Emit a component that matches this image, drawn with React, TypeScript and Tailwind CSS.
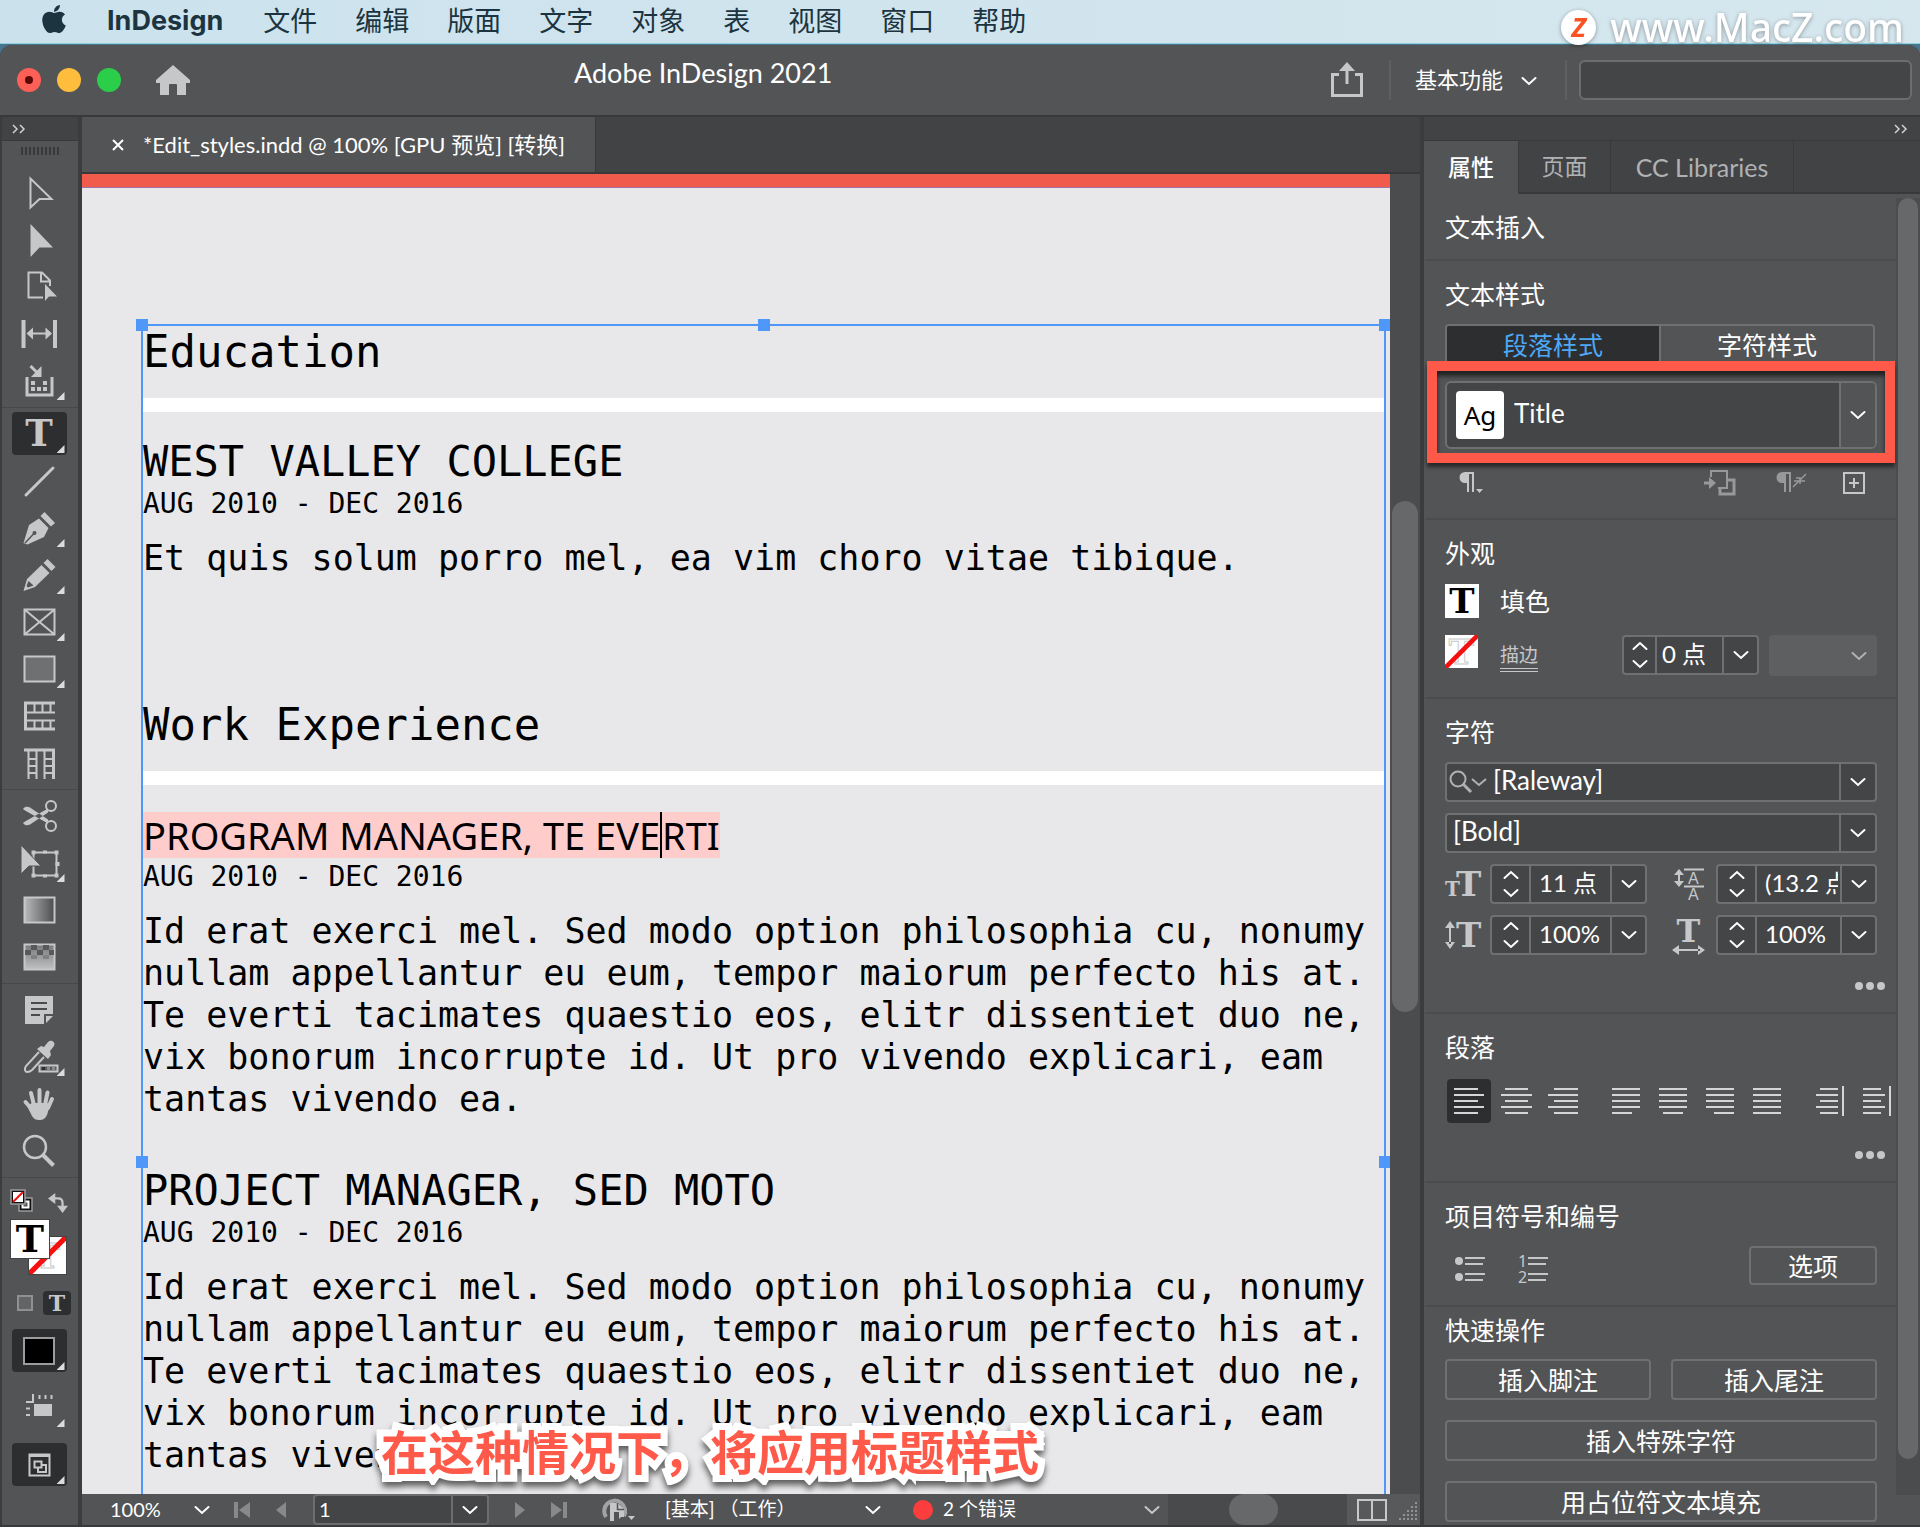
import React, { useState } from 'react';
import { FaApple } from 'react-icons/fa';

const ICON = '#c6c7c9';

const menuItems = ['文件', '编辑', '版面', '文字', '对象', '表', '视图', '窗口', '帮助'];

const bodyLines = [
  'Id erat exerci mel. Sed modo option philosophia cu, nonumy',
  'nullam appellantur eu eum, tempor maiorum perfecto his at.',
  'Te everti tacimates quaestio eos, elitr dissentiet duo ne,',
  'vix bonorum incorrupte id. Ut pro vivendo explicari, eam',
  'tantas vivendo ea.',
];

function Chevron({ up = false, className = '' }: { up?: boolean; className?: string }) {
  return (
    <svg width="16" height="10" viewBox="0 0 16 10" fill="none" className={className}>
      <path
        d={up ? 'M1.500 8 8 2l6.500 6' : 'M1.500 2 8 8l6.500-6'}
        stroke="currentColor"
        strokeWidth="2"
        strokeLinecap="round"
      />
    </svg>
  );
}

function DoubleChevron() {
  return (
    <svg width="14" height="10" viewBox="0 0 14 10" fill="none" stroke="#d0d1d3" strokeWidth="1.500">
      <path d="M1 1l4 4-4 4M8 1l4 4-4 4" />
    </svg>
  );
}

function Glyph({ children }: { children: React.ReactNode }) {
  return (
    <svg width="36" height="36" viewBox="0 0 36 36" fill="none" stroke={ICON} strokeWidth="2" className="overflow-visible">
      {children}
    </svg>
  );
}

function SlabT({ className }: { className: string }) {
  return <span className={`font-['DejaVu_Serif',serif] leading-none font-bold ${className}`}>T</span>;
}

interface Tool {
  name: string;
  icon: React.ReactNode;
  flyout?: boolean;
}

const toolGroups: Tool[][] = [
  [
    { name: '选择', icon: <Glyph><path d="M9.500 3.500v29l9-8.500h12z" /></Glyph> },
    { name: '直接选择', icon: <Glyph><path d="M9.500 2v33l9-9.500H32z" fill={ICON} stroke="none" /></Glyph> },
    {
      name: '页面',
      icon: (
        <Glyph>
          <path d="M22 28.500H7.500v-25H21l8 8V17M20 3.500v9h9" />
          <path d="M24 15v17l4-4.500h8z" fill={ICON} stroke="none" />
        </Glyph>
      ),
    },
    {
      name: '间隙',
      icon: (
        <Glyph>
          <path d="M2.500 4v28M34 4v28" strokeWidth="4" />
          <path d="M10 17.500h16" />
          <path d="M5.500 17.500l6.500-6v12zM31 17.500l-6.500-6v12z" fill={ICON} stroke="none" />
        </Glyph>
      ),
    },
    {
      name: '内容收集器',
      flyout: true,
      icon: (
        <Glyph>
          <path d="M6 14v18h25V14" strokeWidth="3" />
          <path d="M9.500 3l7 7" strokeWidth="3" />
          <path d="M20.500 3v11H10z" fill={ICON} stroke="none" />
          <path d="M10 20h4M22 20h4M10 26h4M16 26h4M22 26h4" strokeWidth="4" />
        </Glyph>
      ),
    },
  ],
  [
    { name: '文字', flyout: true, icon: <SlabT className="text-[37px] text-[#c6c7c9]" /> },
    { name: '直线', icon: <Glyph><path d="M5 32L32 5" strokeWidth="3" strokeLinecap="round" /></Glyph> },
    {
      name: '钢笔',
      flyout: true,
      icon: (
        <Glyph>
          <path d="M19.500 6l4-4 10.500 11-4 3.500zM18 8.500l9.500 9.500-4.500 9-16.500 7.500-4-1.500L8 15z" fill={ICON} stroke="none" />
          <path d="M4 33l9-9.500" stroke="#535456" strokeWidth="1.500" />
          <circle cx="13.500" cy="23" r="2" fill="#535456" stroke="none" />
        </Glyph>
      ),
    },
    {
      name: '铅笔',
      flyout: true,
      icon: (
        <Glyph>
          <path d="M22.500 6l4-4 8 8-4 4zM20.500 8l8 8L14 30 2.500 34 6 22z" fill={ICON} stroke="none" />
          <path d="M7.500 24l5 4.500-5.500 2-1.500-1.500z" fill="#535456" stroke="none" />
        </Glyph>
      ),
    },
    {
      name: '矩形框架',
      flyout: true,
      icon: <Glyph><path d="M3.500 5.500h30v25h-30zM3.500 5.500l30 25M33.500 5.500l-30 25" /></Glyph>,
    },
    {
      name: '矩形',
      flyout: true,
      icon: <Glyph><path d="M3.500 5.500h30v25h-30z" fill="#6f7072" /></Glyph>,
    },
    {
      name: '水平网格',
      icon: (
        <Glyph>
          <path d="M34 5H4.500v26H34" strokeWidth="3" />
          <path d="M4 14.500h30M4 22.500h30M13.500 5v9M21.500 5v9M29.500 5v9M13.500 23v8M21.500 23v8M29.500 23v8" />
        </Glyph>
      ),
    },
    {
      name: '垂直网格',
      icon: (
        <Glyph>
          <path d="M3 5h29.500v29" strokeWidth="3" />
          <path d="M7.500 5v29M15.500 5v29M23.500 5v29M7 14h8M7 21h8M7 28h8M23 14h8M23 21h8M23 28h8" />
        </Glyph>
      ),
    },
  ],
  [
    {
      name: '剪刀',
      icon: (
        <Glyph>
          <circle cx="30" cy="8" r="5" />
          <circle cx="30" cy="28" r="5" />
          <path d="M2 11c2-3 5-2.500 7-1.500l18 12v4L4 12.500zM2 25c2 3 5 2.500 7 1.500l18-12v-4L4 23.500z" fill={ICON} stroke="none" />
        </Glyph>
      ),
    },
    {
      name: '自由变换',
      flyout: true,
      icon: (
        <Glyph>
          <path d="M12.500 7.500h23v23h-23z" />
          <path
            d="M10.500 5.500h4v4h-4zM22 5.500h4v3h-4zM33.500 5.500h4v4h-4zM34.500 17h4v4h-4zM33.500 28.500h4v4h-4zM22 29.500h4v3h-4zM10.500 28.500h4v4h-4z"
            fill={ICON}
            stroke="none"
          />
          <path d="M0 0v29l8-8h12z" fill={ICON} stroke="#535456" strokeWidth="1" />
        </Glyph>
      ),
    },
    {
      name: '渐变色板',
      icon: (
        <Glyph>
          <linearGradient id="gradH">
            <stop offset="0" stopColor="#b9babc" />
            <stop offset="1" stopColor="#4b4c4e" />
          </linearGradient>
          <path d="M3.500 5.500h30v25h-30z" fill="url(#gradH)" />
        </Glyph>
      ),
    },
    {
      name: '渐变羽化',
      icon: (
        <Glyph>
          <linearGradient id="gradV" x2="0" y2="1">
            <stop offset="0" stopColor="#77787a" />
            <stop offset="1" stopColor="#c0c1c3" />
          </linearGradient>
          <path d="M3.500 5.500h30v25h-30z" fill="url(#gradV)" />
          <path d="M10 6h6v5h-6zM22 6h6v5h-6zM4 11h6v5H4zM16 11h6v5h-6zM28 11h5v5h-5z" fill="#58595b" stroke="none" />
          <path d="M10 16h6v4h-6zM22 16h6v4h-6z" fill="#808183" stroke="none" />
        </Glyph>
      ),
    },
  ],
  [
    {
      name: '附注',
      icon: (
        <Glyph>
          <path d="M4 4h28v18h-9v10H4zM25 24h7l-7 7z" fill={ICON} stroke="none" />
          <path d="M10 11h16M10 17h16M10 23h9" stroke="#4a4b4d" />
        </Glyph>
      ),
    },
    {
      name: '颜色主题',
      flyout: true,
      icon: (
        <Glyph>
          <path d="M18 13L5 27c-2 3-1 6 1 6s4-1 5-2l12-13" />
          <path d="M16 10l4-3 3 1 4-5c3-3 8 0 6 4l-4 5 1 4-3 4z" fill={ICON} stroke="none" />
          <path d="M18.500 26.500h18v6h-18z" fill="#58595b" />
          <path d="M21 29.500h3" strokeWidth="3" stroke="#2f3032" />
          <path d="M26 29.500h3M31 29.500h3" strokeWidth="3" stroke="#8a8b8d" />
        </Glyph>
      ),
    },
    {
      name: '抓手',
      icon: (
        <Glyph>
          <path d="M10 7l3 12M18.500 4v14M26.500 6.500L24 19M31 13l-4 9M4.500 16l8 9" strokeWidth="4" strokeLinecap="round" />
          <path d="M11 17h15l3 2-3 10c-2 4-4 5-8 5-3 0-5-1-7-4L6 20z" fill={ICON} stroke="none" />
        </Glyph>
      ),
    },
    {
      name: '缩放显示',
      icon: (
        <Glyph>
          <circle cx="14" cy="14" r="11" strokeWidth="2.500" />
          <path d="M22 22l10.500 10.500" strokeWidth="4" />
        </Glyph>
      ),
    },
  ],
];

function FlyoutMark() {
  return <span className="absolute right-0.5 bottom-0.5 h-2 w-2 bg-[#dcdcde] [clip-path:polygon(100%_0,100%_100%,0_100%)]" />;
}

function ToolButton({ tool, active }: { tool: Tool; active: boolean }) {
  return (
    <button
      aria-label={tool.name}
      className={`relative flex h-[43px] w-[55px] items-center justify-center rounded ${active ? 'bg-[#2d2e30]' : ''}`}
    >
      {tool.icon}
      {tool.flyout && <FlyoutMark />}
    </button>
  );
}

function StrokeNone({ className }: { className: string }) {
  return (
    <span className={`relative flex items-center justify-center overflow-hidden bg-white ${className}`}>
      <SlabT className="text-[34px] text-white [-webkit-text-stroke:1px_#c9c9c9]" />
      <svg viewBox="0 0 36 36" className="absolute inset-0 h-full w-full">
        <path d="M0 36L36 0" stroke="#f50f0f" strokeWidth="5" />
      </svg>
    </span>
  );
}

function Toolbar() {
  return (
    <aside className="flex w-[82px] shrink-0 flex-col border-r-4 border-l-2 border-[#3b3c3e] bg-[#535456]">
      <div className="flex h-6 items-center border-b border-[#38393b] bg-[#424345] px-2.5">
        <DoubleChevron />
      </div>
      <div className="mx-auto mt-1.5 mb-4 h-2 w-[38px] bg-[repeating-linear-gradient(90deg,#38393b_0_2px,transparent_2px_4px)]" />
      {toolGroups.map((group, i) => (
        <div key={i} className={`flex flex-col items-center gap-1 border-b border-[#47484a] pr-0.5 pb-[5px] ${i === 0 ? '' : 'pt-1'}`}>
          {group.map((tool) => (
            <ToolButton key={tool.name} tool={tool} active={tool.name === '文字'} />
          ))}
        </div>
      ))}
      <div className="flex justify-between pt-[11px] pr-2.5 pl-2">
        <button aria-label="默认填色和描边">
          <svg width="24" height="24" viewBox="0 0 24 24">
            <path d="M9 9h13v13H9z" fill="#111" stroke="#9b9c9e" strokeWidth="1.500" />
            <path d="M12.500 12.500h6v6h-6z" fill="#555" stroke="#fff" strokeWidth="2" />
            <path d="M1 1h14v14H1z" fill="#111" stroke="#9b9c9e" strokeWidth="1.500" />
            <path d="M3 3h10v10H3z" fill="#fff" />
            <path d="M3 13L13 3" stroke="#f50f0f" strokeWidth="2" />
          </svg>
        </button>
        <button aria-label="互换填色和描边" className="mt-1">
          <svg width="20" height="20" viewBox="0 0 22 22">
            <path d="M6 6h5q5 0 5 5v4" fill="none" stroke={ICON} strokeWidth="2.500" />
            <path d="M0 6l8-6v12zM10 14h12l-6 8z" fill={ICON} />
          </svg>
        </button>
      </div>
      <div className="relative mx-2 mt-1.5 h-14">
        <StrokeNone className="absolute top-[17px] left-[18px] h-[39px] w-[39px] border border-[#444]" />
        <span className="absolute top-0 left-0 flex h-10 w-10 items-center justify-center border border-[#444] bg-white">
          <SlabT className="text-[38px] text-black" />
        </span>
      </div>
      <div className="mt-4 flex items-center justify-end gap-2.5 pr-[7px]">
        <button aria-label="格式针对容器" className="h-4 w-4 border-2 border-[#8f9092] bg-[#636466]" />
        <button aria-label="格式针对文本" className="flex h-6 w-7 items-center justify-center rounded bg-[#2d2e30]">
          <SlabT className="text-[22px] text-[#c6c7c9]" />
        </button>
      </div>
      <div className="mt-3.5 flex flex-col items-center gap-3.5 pr-0.5">
        <button aria-label="应用颜色" className="relative flex h-[43px] w-[55px] items-center justify-center rounded bg-[#2d2e30]">
          <span className="h-7 w-8 border-2 border-[#9b9c9e] bg-black" />
          <FlyoutMark />
        </button>
        <button aria-label="视图选项" className="relative flex h-[43px] w-[55px] items-center justify-center">
          <Glyph>
            <path d="M13 14h18v12H13z" fill={ICON} stroke="none" />
            <path d="M12 4v8H5M18.500 5v4M24.500 5v4M30.500 5v4M5 18.500h4M5 25h4" strokeWidth="2" />
          </Glyph>
          <FlyoutMark />
        </button>
        <button aria-label="屏幕模式" className="relative flex h-[43px] w-[55px] items-center justify-center rounded bg-[#2d2e30]">
          <Glyph>
            <path d="M8.500 7.500h20v21h-20zM8 9h21" />
            <path d="M13.500 14.500h7v6h-7zM17 21v4h8v-7h-4" />
          </Glyph>
          <FlyoutMark />
        </button>
      </div>
    </aside>
  );
}

function Handle({ className }: { className: string }) {
  return <span className={`absolute h-3 w-3 bg-[#4f98fa] ${className}`} />;
}

function SectionTitle({ children, className = '' }: { children: React.ReactNode; className?: string }) {
  return (
    <div className={className}>
      <h2 className="pb-5 text-[44px] leading-[52px]">{children}</h2>
      <div className="h-3.5 bg-white" />
    </div>
  );
}

function Dates() {
  return <p className="text-[28px] leading-[38px]">AUG 2010 - DEC 2016</p>;
}

function Body({ lines }: { lines: string[] }) {
  return (
    <div className="mt-3.5 text-[35px] leading-[42px]">
      {lines.map((line) => (
        <p key={line}>{line}</p>
      ))}
    </div>
  );
}

function Document() {
  return (
    <div className="relative flex min-w-0 flex-1 flex-col overflow-hidden border-t-[13px] border-[#f05b4c] bg-[#e8e8ea]">
      <div className="h-px bg-[#a374ac]" />
      <div className="relative mt-[136px] mr-1 ml-[59px] flex-1 border-x-2 border-t-2 border-[#4f98fa] font-['DejaVu_Sans_Mono',monospace] whitespace-nowrap text-black">
        <SectionTitle>Education</SectionTitle>
        <h3 className="mt-[27px] text-[42px] leading-[46px]">WEST VALLEY COLLEGE</h3>
        <Dates />
        <Body lines={['Et quis solum porro mel, ea vim choro vitae tibique.']} />
        <SectionTitle className="mt-[120px]">Work Experience</SectionTitle>
        <h3 className="mt-[27px] flex font-['Noto_Sans',sans-serif] text-[38px] leading-[46px]">
          <span className="bg-[#ffcccc]">PROGRAM MANAGER, TE EVE</span>
          <span className="w-0.5 bg-black" />
          <span className="bg-[#ffcccc]">RTI</span>
        </h3>
        <Dates />
        <Body lines={bodyLines} />
        <h3 className="mt-12 text-[42px] leading-[46px]">PROJECT MANAGER, SED MOTO</h3>
        <Dates />
        <Body lines={bodyLines} />
        <Handle className="-top-[7px] -left-[7px]" />
        <Handle className="-top-[7px] left-1/2 -ml-1.5" />
        <Handle className="-top-[7px] -right-[7px]" />
        <Handle className="top-[830px] -left-[7px]" />
        <Handle className="top-[830px] -right-[7px]" />
      </div>
      <p className="absolute bottom-2.5 left-[299px] font-['Noto_Sans_CJK_SC',sans-serif] text-[47px] leading-[68px] font-bold whitespace-nowrap text-[#ff594a] drop-shadow-[0_5px_3px_rgba(0,0,0,0.6)] [-webkit-text-stroke:14px_white] [paint-order:stroke_fill] [stroke-linejoin:round]">
        在这种情况下，将应用标题样式
      </p>
    </div>
  );
}

function StatusBar() {
  return (
    <footer className="flex h-[31px] items-stretch bg-[#535456] text-xl text-white">
      <label className="flex w-[128px] items-center justify-between pl-7">
        <select aria-label="缩放级别" className="w-16 appearance-none bg-transparent pb-0.5">
          <option>100%</option>
        </select>
        <Chevron />
      </label>
      <div className="ml-6 flex w-[52px] items-center justify-between">
        <button aria-label="首页">
          <svg width="16" height="16" viewBox="0 0 16 16" fill="#88898b"><path d="M0 0h4v16H0zM16 0v16L5 8z" /></svg>
        </button>
        <button aria-label="上一页">
          <svg width="10" height="16" viewBox="0 0 10 16" fill="#88898b"><path d="M10 0v16L0 8z" /></svg>
        </button>
      </div>
      <div className="ml-[27px] flex w-[176px] overflow-hidden rounded border-2 border-[#6c6d6f] bg-[#444547]">
        <input aria-label="页码" defaultValue="1" className="w-full min-w-0 bg-transparent px-1 pb-0.5 outline-none" />
        <button aria-label="选择页面" className="flex w-9 shrink-0 items-center justify-center border-l-2 border-[#6c6d6f]">
          <Chevron />
        </button>
      </div>
      <div className="ml-[26px] flex w-[52px] items-center justify-between">
        <button aria-label="下一页">
          <svg width="10" height="16" viewBox="0 0 10 16" fill="#88898b"><path d="M0 0v16l10-8z" /></svg>
        </button>
        <button aria-label="末页">
          <svg width="16" height="16" viewBox="0 0 16 16" fill="#88898b"><path d="M12 0h4v16h-4zM0 0v16l11-8z" /></svg>
        </button>
      </div>
      <button aria-label="打开文档" className="ml-[34px]">
        <svg width="34" height="26" viewBox="0 0 34 26" fill="none">
          <path d="M5 20A10.500 10.500 0 1 1 23 19" stroke="#a2a3a5" strokeWidth="4" />
          <path d="M9 6h8l6 6v8h-3l-2 2v-7h-5v9H9z" fill={ICON} />
          <path d="M16.500 6v6.500H23" stroke="#535456" strokeWidth="1.500" />
          <path d="M27 19h7l-3.500 4z" fill={ICON} />
        </svg>
      </button>
      <label className="ml-[30px] flex w-[216px] items-center justify-between">
        <select aria-label="印前检查配置文件" className="w-44 appearance-none bg-transparent text-[19px]">
          <option>[基本] （工作）</option>
        </select>
        <Chevron />
      </label>
      <label className="ml-8 flex w-[247px] items-center">
        <span className="h-5 w-5 shrink-0 rounded-full bg-[#fb3d3d]" />
        <select aria-label="印前检查错误" className="ml-2.5 flex-1 appearance-none bg-transparent text-[19px]">
          <option>2 个错误</option>
        </select>
        <Chevron className="text-[#c6c7c9]" />
      </label>
      <div className="ml-2 flex flex-1 bg-[#494a4c] pl-[61px]">
        <div className="w-[49px] rounded-full bg-[#67686a]" />
      </div>
      <div className="flex w-[73px] items-center gap-3 bg-[#58595b] pl-2.5">
        <button aria-label="拆分版面视图">
          <svg width="30" height="22" viewBox="0 0 30 22" fill="none" stroke={ICON} strokeWidth="2"><path d="M1 1h28v20H1zM15 1v20" /></svg>
        </button>
        <svg width="18" height="20" viewBox="0 0 18 20" stroke="#929395" strokeWidth="2" strokeDasharray="2 2">
          <path d="M0 19h18M4 15h14M8 11h10M12 7h6M16 3h2" />
        </svg>
      </div>
    </footer>
  );
}

function Section({ title, last = false, children }: { title: string; last?: boolean; children?: React.ReactNode }) {
  return (
    <section className={`pr-[19px] pl-5 ${last ? 'pt-[5px]' : 'border-b-2 border-[#4b4c4e] pt-[15px]'}`}>
      <h4 className="text-[25px] leading-9 text-white">{title}</h4>
      {children}
    </section>
  );
}

function Stepper({ label, value, className, compact = false }: { label: string; value: string; className: string; compact?: boolean }) {
  return (
    <div className={`flex h-10 overflow-hidden rounded border-2 border-[#6f7072] bg-[#444547] ${className}`}>
      <div className={`flex shrink-0 flex-col items-center justify-between border-r-2 border-[#6f7072] py-1 ${compact ? 'w-[33px]' : 'w-[39px]'}`}>
        <button aria-label={`${label} +`}><Chevron up /></button>
        <button aria-label={`${label} -`}><Chevron /></button>
      </div>
      <input
        aria-label={label}
        defaultValue={value}
        className={`mr-0.5 w-full min-w-0 bg-transparent pb-0.5 text-2xl outline-none ${compact ? 'pl-[5px]' : 'pl-2'}`}
      />
      <button aria-label={`${label} 预设`} className="flex w-[35px] shrink-0 items-center justify-center border-l-2 border-[#6f7072]">
        <Chevron />
      </button>
    </div>
  );
}

function Combo({ label, value, children }: { label: string; value: string; children?: React.ReactNode }) {
  return (
    <label className="flex h-10 items-center rounded border-2 border-[#6f7072] bg-[#444547]">
      {children}
      <select aria-label={label} className="h-full min-w-0 flex-1 appearance-none bg-transparent pb-1 pl-1.5 text-[26px] leading-8">
        <option>{value}</option>
      </select>
      <span className="flex h-full w-9 items-center justify-center border-l-2 border-[#6f7072]">
        <Chevron />
      </span>
    </label>
  );
}

function Dots() {
  return (
    <div className="flex justify-end">
      <button aria-label="更多选项" className="-mr-2 flex h-[22px] items-center gap-[3px]">
        <span className="h-2 w-2 rounded-full bg-[#c6c7c9]" />
        <span className="h-2 w-2 rounded-full bg-[#c6c7c9]" />
        <span className="h-2 w-2 rounded-full bg-[#c6c7c9]" />
      </button>
    </div>
  );
}

// each row is [start, end] of one line, top to bottom
const alignments: { name: string; rows: number[][]; bar?: boolean; gap?: boolean }[] = [
  { name: '左对齐', rows: [[0, 24], [0, 30], [0, 24], [0, 30], [0, 24]] },
  { name: '居中对齐', rows: [[4, 27], [0, 31], [4, 27], [0, 31], [4, 27]] },
  { name: '右对齐', rows: [[6, 30], [0, 30], [6, 30], [0, 30], [6, 30]] },
  { name: '双齐末行齐左', gap: true, rows: [[1, 29], [1, 29], [1, 29], [1, 29], [1, 21]] },
  { name: '双齐末行居中', rows: [[1, 29], [1, 29], [1, 29], [1, 29], [5, 25]] },
  { name: '双齐末行齐右', rows: [[1, 29], [1, 29], [1, 29], [1, 29], [9, 29]] },
  { name: '全部强制双齐', rows: [[1, 29], [1, 29], [1, 29], [1, 29], [1, 29]] },
  { name: '朝向书脊对齐', bar: true, gap: true, rows: [[5, 23], [1, 23], [5, 23], [1, 23], [5, 23]] },
  { name: '背向书脊对齐', bar: true, rows: [[1, 19], [1, 23], [1, 19], [1, 23], [1, 19]] },
];

function ActionButton({ children, className = 'h-[41px]' }: { children: string; className?: string }) {
  return (
    <button className={`rounded border-2 border-[#6f7072] text-[25px] leading-8 text-white ${className}`}>
      {children}
    </button>
  );
}

function PropertiesPanel() {
  const [align, setAlign] = useState('左对齐');

  return (
    <aside className="flex w-[496px] shrink-0 flex-col bg-[#535456] text-white">
      <div className="flex h-6 items-center justify-end border-b border-[#38393b] bg-[#424345] pr-3">
        <DoubleChevron />
      </div>
      <div className="flex h-[53px] bg-[#424345] text-[23px] text-[#b0b1b3]">
        <button className="w-[94px] bg-[#535456] font-medium text-white">属性</button>
        <button className="w-[93px] border-x border-b-2 border-[#38393b]">页面</button>
        <button className="w-[183px] border-r border-b-2 border-[#38393b] text-[25px] leading-8">CC Libraries</button>
        <div className="flex-1 border-b-2 border-[#38393b]" />
      </div>
      <div className="flex flex-1">
        <div className="min-w-0 flex-1 pl-px">
          <Section title="文本插入">
            <div className="h-3.5" />
          </Section>

          <Section title="文本样式">
            <div className="mt-3 mr-0.5 flex h-[42px] overflow-hidden rounded border-2 border-[#6f7072] text-[25px] leading-9">
              <button className="flex-1 border-r-2 border-[#6f7072] bg-[#2d2e30] text-[#4ea8f5]">段落样式</button>
              <button className="flex-1">字符样式</button>
            </div>
            <div className="relative mt-[15px]">
              <label className="flex h-[68px] items-center rounded-md border-2 border-[#6f7072] bg-[#444547]">
                <span className="ml-[9px] flex h-12 w-12 items-center justify-center rounded bg-white font-['Noto_Sans',sans-serif] text-[26px] text-black">
                  Ag
                </span>
                <select aria-label="段落样式" className="min-w-0 flex-1 appearance-none bg-transparent pb-1 pl-2.5 text-[26px]">
                  <option>Title</option>
                </select>
                <span className="flex h-full w-9 items-center justify-center rounded-r border-l-2 border-[#6f7072] bg-[#535456]">
                  <Chevron />
                </span>
              </label>
              <div className="pointer-events-none absolute -inset-x-[18px] -top-5 -bottom-3.5 border-10 border-[#ff594a] shadow-[0_4px_4px_rgba(0,0,0,0.55),inset_0_5px_4px_rgba(0,0,0,0.6)]" />
            </div>
            <div className="mt-[18px] mb-[19px] flex h-8 items-center pr-3 pl-3 text-[#c6c7c9]">
              <button aria-label="段落样式菜单">
                <svg width="28" height="26" viewBox="0 0 28 26" fill={ICON}>
                  <path d="M8 2h9v20h-2V4h-3v18h-2V13H8A5.500 5.500 0 0 1 8 2zM19 19h7l-3.500 4z" />
                </svg>
              </button>
              <button aria-label="重新定义样式" className="ml-auto opacity-60">
                <svg width="33" height="28" viewBox="0 0 33 28" fill="none" stroke={ICON} strokeWidth="2">
                  <path d="M7 8V2h16v17H14" />
                  <path d="M24 11h6v14H16v-6" strokeWidth="3" />
                  <path d="M0 14h7" strokeWidth="3" />
                  <path d="M5 8v12l7-6z" fill={ICON} stroke="none" />
                </svg>
              </button>
              <button aria-label="清除优先选项" className="ml-[38px] opacity-60">
                <svg width="32" height="26" viewBox="0 0 32 26" fill={ICON}>
                  <path d="M7 2h9v20h-2V4h-3v18H9V13H7A5.500 5.500 0 0 1 7 2z" />
                  <path d="M18 17L31 4M19 11h11M21 8h4v6" stroke={ICON} strokeWidth="1.500" fill="none" />
                </svg>
              </button>
              <button aria-label="创建新样式" className="ml-9">
                <svg width="22" height="22" viewBox="0 0 22 22" fill="none" stroke={ICON} strokeWidth="2">
                  <path d="M1 1h20v20H1zM11 6v10M6 11h10" />
                </svg>
              </button>
            </div>
          </Section>

          <Section title="外观">
            <div className="mt-3 flex h-9 items-center">
              <button aria-label="填色" className="flex h-[34px] w-[34px] items-center justify-center bg-white">
                <SlabT className="text-[34px] text-black" />
              </button>
              <span className="ml-[21px] text-[25px] leading-9">填色</span>
            </div>
            <div className="mt-4 mb-[21px] flex h-[41px]">
              <button aria-label="描边颜色" className="h-[33px] w-[34px]">
                <StrokeNone className="h-[33px] w-[33px]" />
              </button>
              <a href="#stroke" className="mt-1.5 ml-[21px] h-[31px] border-b-4 border-double border-[#c6c7c9] text-[19px] text-[#c6c7c9]">
                描边
              </a>
              <Stepper label="描边粗细" value="0 点" className="ml-auto w-[137px]" compact />
              <div className="ml-2.5 flex h-[41px] w-[108px] items-center justify-end rounded bg-[#5e5f61] pr-2.5 text-[#b0b1b3]">
                <Chevron />
              </div>
            </div>
          </Section>

          <Section title="字符">
            <div className="mt-3 flex flex-col gap-[11px]">
              <Combo label="字体" value="[Raleway]">
                <svg width="38" height="24" viewBox="0 0 38 24" fill="none" stroke="#b0b1b3" strokeWidth="2" className="ml-0.5">
                  <circle cx="9" cy="9" r="7.500" />
                  <path d="M14 14l8 8" strokeWidth="3" />
                  <path d="M23 9l7 6 7-6" />
                </svg>
              </Combo>
              <Combo label="字体样式" value="[Bold]" />
              <div className="flex items-center">
                <span className="flex w-[45px] items-baseline text-[#c6c7c9]">
                  <SlabT className="text-[20px]" />
                  <SlabT className="-ml-1 text-[34px]" />
                </span>
                <Stepper label="字体大小" value="11 点" className="w-[157px]" />
                <span className="ml-auto flex w-[42px] text-[#c6c7c9]">
                  <svg width="30" height="34" viewBox="0 0 30 34" fill="none" stroke={ICON} strokeWidth="2">
                    <path d="M5 5v12M10 2.500h20M10 19.500h20" />
                    <path d="M0 8l5-6 5 6zM0 14l5 6 5-6z" fill={ICON} stroke="none" />
                    <text x="14" y="17" fontSize="16" fontFamily="Liberation Sans" fill={ICON} stroke="none">A</text>
                    <text x="14" y="33" fontSize="16" fontFamily="Liberation Sans" fill={ICON} stroke="none">A</text>
                  </svg>
                </span>
                <Stepper label="行距" value="(13.2 点)" className="w-[161px]" />
              </div>
              <div className="flex items-center">
                <span className="flex w-[45px] items-center gap-px text-[#c6c7c9]">
                  <svg width="10" height="28" viewBox="0 0 10 28" fill={ICON}>
                    <path d="M4 5h2v18H4zM0 7l5-7 5 7zM0 21l5 7 5-7z" />
                  </svg>
                  <SlabT className="text-[34px]" />
                </span>
                <Stepper label="垂直缩放" value="100%" className="w-[157px]" />
                <span className="ml-auto flex w-[44px] flex-col text-[#c6c7c9]">
                  <SlabT className="-mb-0.5 w-[33px] text-center text-[32px]" />
                  <svg width="33" height="10" viewBox="0 0 33 10" fill={ICON}>
                    <path d="M5 4h23v2H5zM7 0v10L0 5zM26 0v10l7-5z" />
                  </svg>
                </span>
                <Stepper label="水平缩放" value="100%" className="w-[161px]" />
              </div>
            </div>
            <div className="mt-5 mb-[15px]">
              <Dots />
            </div>
          </Section>

          <Section title="段落">
            <div className="mt-3.5 -mr-6 ml-0.5 flex gap-[3px]">
              {alignments.map(({ name, rows, bar, gap }) => (
                <button
                  key={name}
                  aria-label={name}
                  onClick={() => setAlign(name)}
                  className={`flex h-11 w-11 shrink-0 items-center justify-center rounded ${gap ? 'ml-4' : ''} ${align === name ? 'bg-[#2d2e30]' : ''}`}
                >
                  <svg width="30" height="30" viewBox="0 0 30 30" stroke="#d4d5d7" strokeWidth="2" className="overflow-visible">
                    {rows.map(([a, b], i) => (
                      <path key={i} d={`M${a} ${3 + i * 6}H${b}`} />
                    ))}
                    {bar && <path d="M28 0v30" />}
                  </svg>
                </button>
              ))}
            </div>
            <div className="mt-[21px] mb-[15px]">
              <Dots />
            </div>
          </Section>

          <Section title="项目符号和编号">
            <div className="mt-[11px] mb-5 flex items-center pt-px pl-2.5">
              <button aria-label="项目符号列表" className="mt-1.5">
                <svg width="30" height="28" viewBox="0 0 30 28" stroke={ICON} strokeWidth="2">
                  <path d="M10 3h20M10 9h18M10 19h20M10 25h18" />
                  <circle cx="4" cy="6" r="4" fill={ICON} stroke="none" />
                  <circle cx="4" cy="22" r="4" fill={ICON} stroke="none" />
                </svg>
              </button>
              <button aria-label="编号列表" className="mt-1.5 ml-[33px]">
                <svg width="30" height="28" viewBox="0 0 30 28" stroke={ICON} strokeWidth="2" className="overflow-visible">
                  <path d="M10 3h20M10 9h18M10 19h20M10 25h18" />
                  <text x="0" y="12" fontSize="16" fontFamily="Noto Sans" fill={ICON} stroke="none">1</text>
                  <text x="0" y="28" fontSize="16" fontFamily="Noto Sans" fill={ICON} stroke="none">2</text>
                </svg>
              </button>
              <ActionButton className="ml-auto h-[39px] w-32">选项</ActionButton>
            </div>
          </Section>

          <Section title="快速操作" last>
            <div className="mt-[11px] mb-0.5 grid grid-cols-2 gap-5">
              <ActionButton>插入脚注</ActionButton>
              <ActionButton>插入尾注</ActionButton>
              <ActionButton className="col-span-2 h-[41px]">插入特殊字符</ActionButton>
              <ActionButton className="col-span-2 h-[41px]">用占位符文本填充</ActionButton>
            </div>
          </Section>
        </div>
        <div className="mt-1 mb-[30px] w-6 bg-[#4b4c4e] pr-0.5 pb-9 pl-0.5">
          <div className="h-full rounded-full bg-[#67686a]" />
        </div>
      </div>
    </aside>
  );
}

export default function App() {
  return (
    <div className="flex min-h-screen flex-col bg-[#47758c] font-[Lato,'Noto_Sans_CJK_SC',sans-serif]">
      <nav className="flex h-11 items-center border-b border-[#8fd0dc] bg-linear-to-r from-[#cbe2ed] to-[#d6e7ee] pl-10 text-[27px] text-[#1c343f]">
        <FaApple className="mb-1.5 h-8 w-7" />
        <button className="ml-[39px] font-[Inter,sans-serif] text-[27px] font-bold">InDesign</button>
        <div className="ml-10 flex gap-[38px]">
          {menuItems.map((item) => (
            <button key={item}>{item}</button>
          ))}
        </div>
        <a href="#macz" className="mt-3 mr-4 ml-auto flex items-center gap-3.5 font-['Noto_Sans',sans-serif] text-[39px] font-medium text-white drop-shadow-[0_1px_2px_rgba(0,0,0,0.35)]">
          <span className="flex h-[35px] w-[35px] items-center justify-center rounded-full bg-white text-[27px] font-bold text-[#fb5223] italic">Z</span>
          www.MacZ.com
        </a>
      </nav>

      <div className="mt-px flex flex-1 flex-col overflow-hidden rounded-t-xl border-b-2 border-[#38393b] bg-[#38393b]">
        <header className="flex h-[70px] items-center bg-[#535456] pr-2 pl-[17px] text-white">
          <div className="flex gap-4">
            <button aria-label="关闭" className="flex h-6 w-6 items-center justify-center rounded-full bg-[#fe5f57]">
              <span className="h-2 w-2 rounded-full bg-[#5c0a06]" />
            </button>
            <button aria-label="最小化" className="h-6 w-6 rounded-full bg-[#febd3d]" />
            <button aria-label="缩放" className="h-6 w-6 rounded-full bg-[#2bce49]" />
          </div>
          <button aria-label="主页" className="ml-[34px]">
            <svg width="36" height="32" viewBox="0 0 36 32" fill={ICON}>
              <path d="M18 1L1 16v3h4v12h9V21q0-1 1-1h6q1 0 1 1v10h9V19h4v-3z" />
            </svg>
          </button>
          <h1 className="mb-3.5 ml-[383px] text-[27px]">Adobe InDesign 2021</h1>
          <button aria-label="共享" className="ml-auto">
            <svg width="32" height="36" viewBox="0 0 32 36" fill="none" stroke={ICON} strokeWidth="3">
              <path d="M8 12.500H1.500v21h29v-21H24M16 6v16" />
              <path d="M16 0l8 9H8z" fill={ICON} stroke="none" />
            </svg>
          </button>
          <div className="ml-[26px] h-10 w-0.5 bg-[#5f6062]" />
          <button className="flex items-center pr-[22px] pb-0.5 pl-6 text-[22px]">
            基本功能
            <Chevron className="mt-1 ml-[18px]" />
          </button>
          <div className="ml-1.5 h-10 w-0.5 bg-[#5f6062]" />
          <input aria-label="搜索" className="ml-3 h-10 w-[333px] rounded-md border-2 border-[#6c6d6f] bg-[#444547]" />
        </header>

        <div className="mt-0.5 flex flex-1">
          <Toolbar />
          <main className="flex min-w-0 flex-1 flex-col">
            <div className="flex h-[57px] border-b-2 border-[#38393b] bg-[#424345]">
              <div className="flex w-[514px] items-center border-r border-[#38393b] bg-[#535456] pl-[29px] text-white">
                <button aria-label="关闭文档">
                  <svg width="14" height="14" viewBox="0 0 14 14" stroke="#fff" strokeWidth="2"><path d="M2 2l10 10M12 2L2 12" /></svg>
                </button>
                <button className="ml-[18px] text-[22px] whitespace-nowrap">*Edit_styles.indd @ 100% [GPU 预览] [转换]</button>
              </div>
            </div>
            <div className="flex min-h-0 flex-1">
              <Document />
              <div className="w-[30px] bg-[#4b4c4e] px-0.5 pt-[327px]">
                <div className="h-[511px] rounded-full bg-[#67686a]" />
              </div>
            </div>
            <StatusBar />
          </main>
          <div className="w-1 bg-[#3b3c3e]" />
          <PropertiesPanel />
        </div>
      </div>
    </div>
  );
}
